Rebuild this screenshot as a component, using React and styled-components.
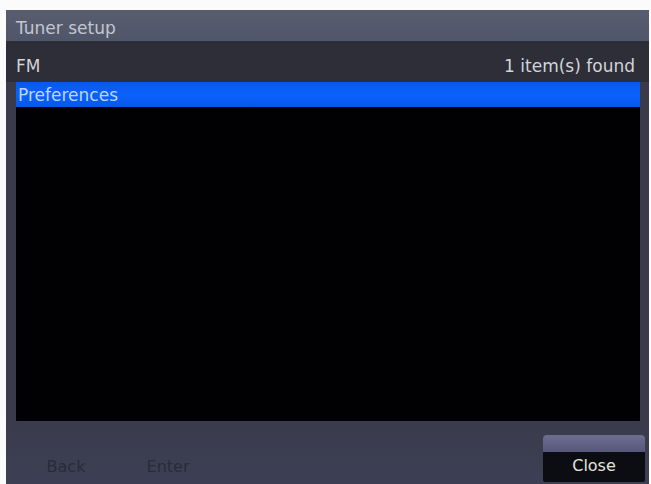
import React from "react";
import styled, { createGlobalStyle } from "styled-components";

const Global = createGlobalStyle`
  html, body { margin: 0; padding: 0; background: #ffffff; }
  body { font-family: "DejaVu Sans", "Liberation Sans", sans-serif; }
`;

const Page = styled.div`
  width: 651px;
  height: 484px;
  padding: 10px 2px 0 6px;
  box-sizing: border-box;
  background: #fbfbfb;
  overflow: hidden;
`;

const Window = styled.div`
  height: 474px;
  display: flex;
  flex-direction: column;
  background: #3a3b4a;
  font-size: 17px;
`;

const TitleBar = styled.div`
  height: 31px;
  box-sizing: border-box;
  padding: 6px 10px 0;
  line-height: 24px;
  background: linear-gradient(#585d6e, #50566a);
  color: #c3c6d0;
  flex: none;
`;

const HeaderRow = styled.div`
  height: 41px;
  box-sizing: border-box;
  padding: 8px 14px 0 10px;
  display: flex;
  align-items: center;
  justify-content: space-between;
  line-height: 20px;
  background: #2d2e37;
  color: #d2d4da;
  flex: none;
`;

const ListFrame = styled.div`
  flex: 1;
  padding: 0 9px 0 10px;
  display: flex;
  flex-direction: column;
  background: #393a4a;
`;

const List = styled.div`
  flex: 1;
  background: #010103;
  display: flex;
  flex-direction: column;
`;

const ListRow = styled.div`
  height: 25px;
  box-sizing: border-box;
  padding: 1px 0 0 2px;
  line-height: 24px;
  background: ${(p) => (p.$selected ? "linear-gradient(#0c56ef, #0a62fc 50%, #0a55ea)" : "transparent")};
  color: ${(p) => (p.$selected ? "#bcd6ff" : "#d0d0d0")};
`;

const Footer = styled.div`
  height: 63px;
  box-sizing: border-box;
  padding: 0 4px 2px 34px;
  display: flex;
  align-items: flex-end;
  background: linear-gradient(#3a3b4c, #3d3f54);
  flex: none;
`;

const SoftKey = styled.div`
  width: 52px;
  height: 30px;
  margin-left: ${(p) => p.$gap || 0}px;
  line-height: 30px;
  text-align: center;
  color: #292b39;
  font-size: 16px;
`;

const Spacer = styled.div`
  flex: 1;
`;

const CloseButton = styled.div`
  width: 102px;
  height: 47px;
  display: flex;
  flex-direction: column;
  border-radius: 4px 4px 2px 2px;
  overflow: hidden;
`;

const CloseTop = styled.div`
  height: 17px;
  background: linear-gradient(#6e6f90, #55567a);
`;

const CloseBody = styled.div`
  flex: 1;
  background: #0c0d12;
  color: #e2e5dc;
  text-align: center;
  line-height: 28px;
  font-size: 16px;
`;

export default function App() {
  return (
    <>
      <Global />
      <Page>
        <Window>
          <TitleBar>Tuner setup</TitleBar>
          <HeaderRow>
            <span>FM</span>
            <span>1 item(s) found</span>
          </HeaderRow>
          <ListFrame>
            <List>
              <ListRow $selected>Preferences</ListRow>
            </List>
          </ListFrame>
          <Footer>
            <SoftKey>Back</SoftKey>
            <SoftKey $gap={50}>Enter</SoftKey>
            <Spacer />
            <CloseButton>
              <CloseTop />
              <CloseBody>Close</CloseBody>
            </CloseButton>
          </Footer>
        </Window>
      </Page>
    </>
  );
}
